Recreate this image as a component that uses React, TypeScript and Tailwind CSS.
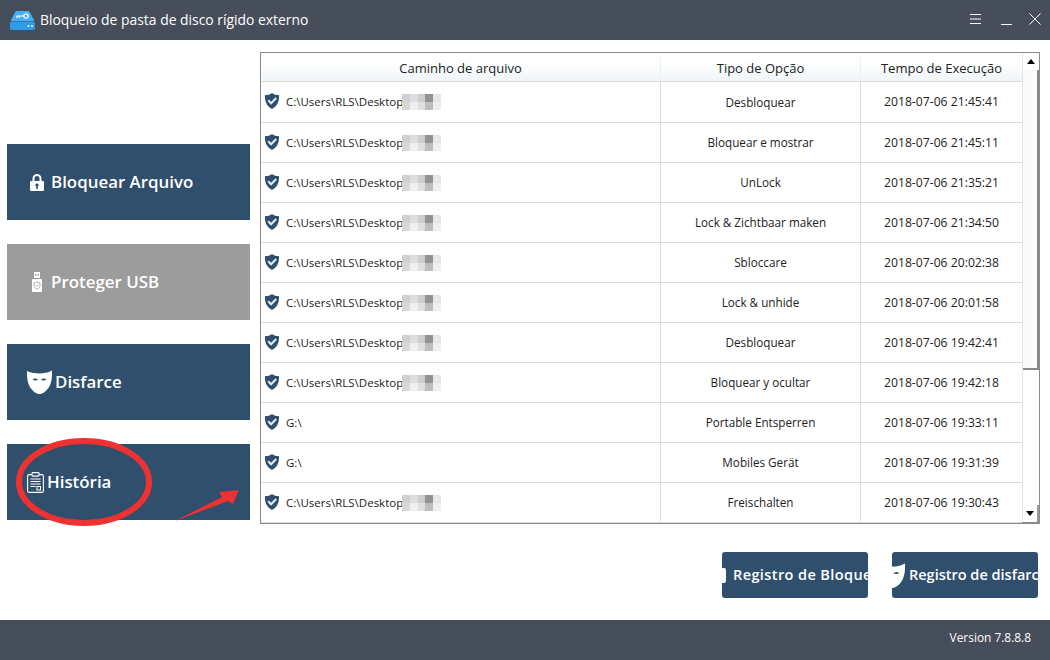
const rows = [
  { path: "C:\\Users\\RLS\\Desktop", blur: true, option: "Desbloquear", time: "2018-07-06 21:45:41" },
  { path: "C:\\Users\\RLS\\Desktop", blur: true, option: "Bloquear e mostrar", time: "2018-07-06 21:45:11" },
  { path: "C:\\Users\\RLS\\Desktop", blur: true, option: "UnLock", time: "2018-07-06 21:35:21" },
  { path: "C:\\Users\\RLS\\Desktop", blur: true, option: "Lock & Zichtbaar maken", time: "2018-07-06 21:34:50" },
  { path: "C:\\Users\\RLS\\Desktop", blur: true, option: "Sbloccare", time: "2018-07-06 20:02:38" },
  { path: "C:\\Users\\RLS\\Desktop", blur: true, option: "Lock & unhide", time: "2018-07-06 20:01:58" },
  { path: "C:\\Users\\RLS\\Desktop", blur: true, option: "Desbloquear", time: "2018-07-06 19:42:41" },
  { path: "C:\\Users\\RLS\\Desktop", blur: true, option: "Bloquear y ocultar", time: "2018-07-06 19:42:18" },
  { path: "G:\\", blur: false, option: "Portable Entsperren", time: "2018-07-06 19:33:11" },
  { path: "G:\\", blur: false, option: "Mobiles Gerät", time: "2018-07-06 19:31:39" },
  { path: "C:\\Users\\RLS\\Desktop", blur: true, option: "Freischalten", time: "2018-07-06 19:30:43" },
]

const blurCells = [
  "bg-[#d0d0d0]", "bg-[#dedede]", "bg-[#cdcdcd]", "bg-[#929292]", "bg-[#e6e6e6]",
  "bg-[#d8d8d8]", "bg-[#efefef]", "bg-[#dfdfdf]", "bg-[#bdbdbd]", "bg-[#ededed]",
]

function DiskLogo() {
  return (
    <svg width="25" height="19" viewBox="0 0 25 19">
      <path d="M5 1.500C5.400.6 6 0 7 0h11c1 0 1.600.6 2 1.500L24.500 10H.5z" fill="#45aef5" />
      <rect x="0" y="10.500" width="25" height="8.500" rx="2" fill="#2f9ce8" />
      <circle cx="16" cy="5" r="2.200" fill="none" stroke="#fff" strokeWidth="1.200" />
      <path d="M13.500 5H7V7M9.500 5V6.500" fill="none" stroke="#fff" strokeWidth="1.200" />
      <rect x="17.500" y="14" width="2" height="2" fill="#bfe3fb" />
      <rect x="21" y="14" width="2" height="2" fill="#bfe3fb" />
    </svg>
  )
}

function LockIcon() {
  return (
    <svg width="14" height="17" viewBox="0 0 14 17">
      <path d="M3.500 7V4.500a3.500 3.500 0 0 1 7 0V7" fill="none" stroke="#fff" strokeWidth="2" />
      <path fillRule="evenodd" d="M1 7h12a1 1 0 0 1 1 1v8a1 1 0 0 1-1 1H1a1 1 0 0 1-1-1V8a1 1 0 0 1 1-1zm6 2.500a1.600 1.600 0 0 0-.8 3V15h1.600v-2.500a1.600 1.600 0 0 0-.8-3z" fill="#fff" />
    </svg>
  )
}

function UsbIcon() {
  return (
    <svg width="10" height="20" viewBox="0 0 10 20">
      <path fillRule="evenodd" d="M2 0h6v6H2zM3 2v1.500h1.500V2zM5.500 2v1.500H7V2z" fill="#fff" />
      <path fillRule="evenodd" d="M1 7h8a1 1 0 0 1 1 1v11a1 1 0 0 1-1 1H1a1 1 0 0 1-1-1V8a1 1 0 0 1 1-1z" fill="#fff" />
      <path d="M5 10l3 1v2.500c0 1.800-1.300 2.800-3 3.500-1.700-.7-3-1.700-3-3.500V11z" fill="none" stroke="#9c9c9c" strokeWidth="0.8" />
      <path d="M3.700 13.300l1 1 1.700-1.800" fill="none" stroke="#9c9c9c" strokeWidth="0.8" />
    </svg>
  )
}

function MaskIcon({ width = 25, height = 24 }: { width?: number; height?: number }) {
  return (
    <svg width={width} height={height} viewBox="0 0 25 24">
      <path
        fillRule="evenodd"
        d="M0 1C4 2.800 8.500 3.500 12.500 3.500S21 2.800 25 .5c.3 6.500-.4 12.500-3.200 17C19.300 21.300 15.500 24 12.500 24S5.700 21.300 3.200 17.500C.4 13 -.2 7.500 0 1zM5.500 9.500c1.700-1.300 3.900-1.300 5.500.6-2 .6-3.900.5-5.500-.6zm14 0c-1.700-1.300-3.900-1.300-5.500.6 2 .6 3.900.5 5.500-.6z"
        fill="#fff"
      />
    </svg>
  )
}

function ClipboardIcon() {
  return (
    <svg width="17" height="21" viewBox="0 0 17 21" fill="none" stroke="#fff">
      <rect x="0.600" y="2.600" width="15.800" height="17.800" rx="1.500" strokeWidth="1.100" />
      <rect x="5" y="0.600" width="7" height="3.500" rx="0.800" fill="#2f4f6d" strokeWidth="1.100" />
      <path d="M3.500 7h10M3.500 9.500h10M3.500 12h10M3.500 14.500h5" strokeWidth="1" />
      <rect x="10" y="14.500" width="3.500" height="3.500" strokeWidth="1" />
    </svg>
  )
}

function ShieldIcon() {
  return (
    <svg width="16" height="16" viewBox="0 0 16 17" className="mb-[2px]">
      <path d="M8 0c2 1.500 4.500 2.300 7.500 2.500.3 6.500-1.800 11.500-7.500 14.500C2.300 14 .2 9 .5 2.500 3.500 2.300 6 1.500 8 0z" fill="#2f4f6d" />
      <path d="M4 7.800l3 3 5.500-5.500" fill="none" stroke="#dfe9f2" strokeWidth="2.200" />
    </svg>
  )
}

function NavButton({ icon, label, grey, pad }: { icon: React.ReactNode; label: string; grey?: boolean; pad: string }) {
  return (
    <div className={`flex h-[76px] w-[243px] items-center ${pad} ${grey ? "bg-[#9c9c9c]" : "bg-[#2f4f6d]"}`}>
      {icon}
      <span className="text-[16.900px] font-semibold text-white">{label}</span>
    </div>
  )
}

export default function App() {
  return (
    <div className="relative flex h-[660px] w-[1050px] flex-col overflow-hidden bg-white font-['Open_Sans','Noto_Sans',sans-serif]">
      <div className="flex h-10 shrink-0 items-center bg-[#464d5b] pl-[10px] pr-[9px]">
        <DiskLogo />
        <span className="ml-[5px] text-[13.900px] text-white">Bloqueio de pasta de disco rígido externo</span>
        <div className="mb-[2px] ml-auto flex items-center">
          <svg width="11" height="10" viewBox="0 0 11 10" stroke="#fff" strokeWidth="1"><path d="M0 .5h11M0 5h11M0 9.500h11" /></svg>
          <svg className="ml-[20px]" width="11" height="12" viewBox="0 0 11 12" stroke="#fff" strokeWidth="1"><path d="M0 11.500h11" /></svg>
          <svg className="ml-[17px]" width="12" height="12" viewBox="0 0 12 12" stroke="#fff" strokeWidth="1"><path d="M.5.500l11 11M11.500.500l-11 11" /></svg>
        </div>
      </div>

      <div className="flex flex-1">
        <div className="flex w-[260px] shrink-0 flex-col gap-6 pl-[7px] pt-[104px]">
          <NavButton pad="pl-[23px] gap-[7px]" icon={<LockIcon />} label="Bloquear Arquivo" />
          <NavButton pad="pl-[25px] gap-[9px]" icon={<UsbIcon />} label="Proteger USB" grey />
          <NavButton pad="pl-[20px] gap-[3px]" icon={<MaskIcon />} label="Disfarce" />
          <NavButton pad="pl-[20px] gap-[3px]" icon={<ClipboardIcon />} label="História" />
        </div>

        <div className="flex flex-1 flex-col pt-3">
          <div className="flex h-[472px] w-[780px] border border-b-2 border-[#8a8a8a]">
            <div className="w-[761px]">
              <div className="flex h-[29px] border-b border-[#d9d9d9] bg-gradient-to-b from-white from-30% to-[#f1f5f9] pt-[3px] text-[13px] text-[#222]">
                <div className="flex w-[400px] items-center justify-center border-r border-[#eef1f4]">Caminho de arquivo</div>
                <div className="flex w-[200px] items-center justify-center border-r border-[#eef1f4]">Tipo de Opção</div>
                <div className="flex w-[161px] items-center justify-center">Tempo de Execução</div>
              </div>
              {rows.map((row, i) => (
                <div key={i} className={`flex border-b border-[#dcdcdc] text-[#222] ${i === 0 ? "h-[41px]" : "h-10"}`}>
                  <div className="flex w-[400px] items-center border-r border-[#dcdcdc] pl-[3px]">
                    <ShieldIcon />
                    <div className="ml-[6px] w-[116px] overflow-hidden whitespace-nowrap text-[11.500px]">{row.path}</div>
                    {row.blur && (
                      <div className="grid h-4 w-[39px] grid-cols-5">
                        {blurCells.map((c) => (
                          <div key={c} className={c} />
                        ))}
                      </div>
                    )}
                  </div>
                  <div className="flex w-[200px] items-center justify-center border-r border-[#dcdcdc] pt-px text-[11.700px]">{row.option}</div>
                  <div className="flex w-[161px] items-center justify-center pt-px text-[12.200px]">{row.time}</div>
                </div>
              ))}
            </div>
            <div className="flex w-[17px] flex-col border-l border-[#e6e6e6]">
              <div className="flex h-[17px] items-center justify-center">
                <div className="h-0 w-0 border-x-[4px] border-b-[5px] border-x-transparent border-b-black" />
              </div>
              <div className="h-[300px] border-b-2 border-r-2 border-[#8a8a8a] bg-[#fafafa]" />
              <div className="flex-1" />
              <div className="flex h-[17px] items-center justify-center border-r-2 border-[#9a9a9a]">
                <div className="h-0 w-0 border-x-[4px] border-t-[5px] border-x-transparent border-t-black" />
              </div>
            </div>
          </div>

          <div className="mt-[28px] flex gap-6 pl-[462px]">
            <div className="flex h-[46px] w-[146px] items-center overflow-hidden rounded-[3px] bg-[#2f4f6d]">
              <div className="ml-[-5px] h-[15px] w-[9px] shrink-0 rounded-[2px] bg-white" />
              <span className="ml-[7px] whitespace-nowrap text-[14.500px] font-semibold tracking-[0.4px] text-white">Registro de Bloqueio</span>
            </div>
            <div className="flex h-[46px] w-[146px] items-center overflow-hidden rounded-[3px] bg-[#2f4f6d]">
              <div className="ml-[-13px] shrink-0"><MaskIcon width={26} height={25} /></div>
              <span className="ml-[4px] whitespace-nowrap text-[14.500px] font-semibold text-white">Registro de disfarce</span>
            </div>
          </div>
        </div>
      </div>

      <div className="flex h-10 shrink-0 items-center justify-end bg-[#464d5b] pb-[4px] pr-[19px]">
        <span className="text-[11.900px] text-white">Version 7.8.8.8</span>
      </div>

      <svg className="absolute left-[14px] top-[438px]" width="230" height="90" viewBox="0 0 230 90" fill="none">
        <ellipse cx="70" cy="44" rx="65" ry="41" stroke="#ee3131" strokeWidth="6" />
        <path d="M161 83L208 59L205 54L225 52L219 66L214 63z" fill="#ee3131" />
      </svg>
    </div>
  )
}
